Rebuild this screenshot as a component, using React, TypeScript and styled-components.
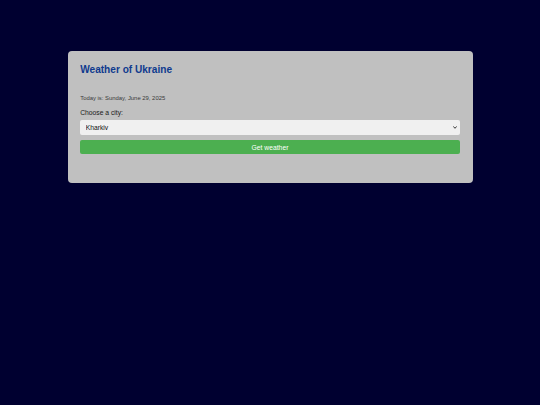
import styled, { createGlobalStyle } from "styled-components";

const GlobalStyle = createGlobalStyle`
  html, body {
    margin: 0;
    padding: 0;
    background: #000030;
    font-family: "Liberation Sans", Arial, sans-serif;
  }
`;

const Page = styled.div`
  min-height: 405px;
  padding-top: 51px;
  box-sizing: border-box;
`;

const Card = styled.div`
  width: 405px;
  margin: 0 auto;
  box-sizing: border-box;
  padding: 12.7px 12.7px 29px;
  background: #c0c0c0;
  border-radius: 4px;
  display: flex;
  flex-direction: column;
`;

const Title = styled.h2`
  margin: 0;
  font-size: 10.1px;
  line-height: 11.6px;
  font-weight: bold;
  color: #0f3a8e;
`;

const Today = styled.p`
  margin: 19.3px 0 0;
  font-size: 5.9px;
  line-height: 6.8px;
  color: #3a3a3a;
`;

const Label = styled.label`
  margin-top: 7.8px;
  font-size: 6.75px;
  line-height: 7.8px;
  color: #1a1a1a;
`;

const SelectWrap = styled.div`
  position: relative;
  margin-top: 3.4px;
  display: flex;
`;

const Select = styled.select`
  flex: 1;
  appearance: none;
  height: 14.5px;
  padding: 0 0 0 5.5px;
  font-family: inherit;
  font-size: 6.75px;
  color: #111;
  background: #f0f0f0;
  border: none;
  border-radius: 2px;
  outline: none;
`;

const Chevron = styled.svg`
  position: absolute;
  right: 2.5px;
  top: 5.8px;
  width: 4px;
  height: 3px;
  pointer-events: none;
`;

const Button = styled.button`
  margin-top: 5.5px;
  height: 14px;
  padding: 0;
  font-family: inherit;
  font-size: 6.75px;
  color: #fff;
  background: #4caf50;
  border: none;
  border-radius: 2px;
  cursor: pointer;
`;

const cities = ["Kyiv", "Kharkiv", "Odesa", "Lviv", "Dnipro"];

export default function App() {
  return (
    <>
      <GlobalStyle />
      <Page>
        <Card>
          <Title>Weather of Ukraine</Title>
          <Today>Today is: Sunday, June 29, 2025</Today>
          <Label htmlFor="city">Choose a city:</Label>
          <SelectWrap>
            <Select id="city" defaultValue="Kharkiv">
              {cities.map((c) => (
                <option key={c} value={c}>
                  {c}
                </option>
              ))}
            </Select>
            <Chevron viewBox="0 0 4 3">
              <path d="M0.3 0.4 L2 2.3 L3.7 0.4" fill="none" stroke="#222" strokeWidth="0.9" />
            </Chevron>
          </SelectWrap>
          <Button>Get weather</Button>
        </Card>
      </Page>
    </>
  );
}
